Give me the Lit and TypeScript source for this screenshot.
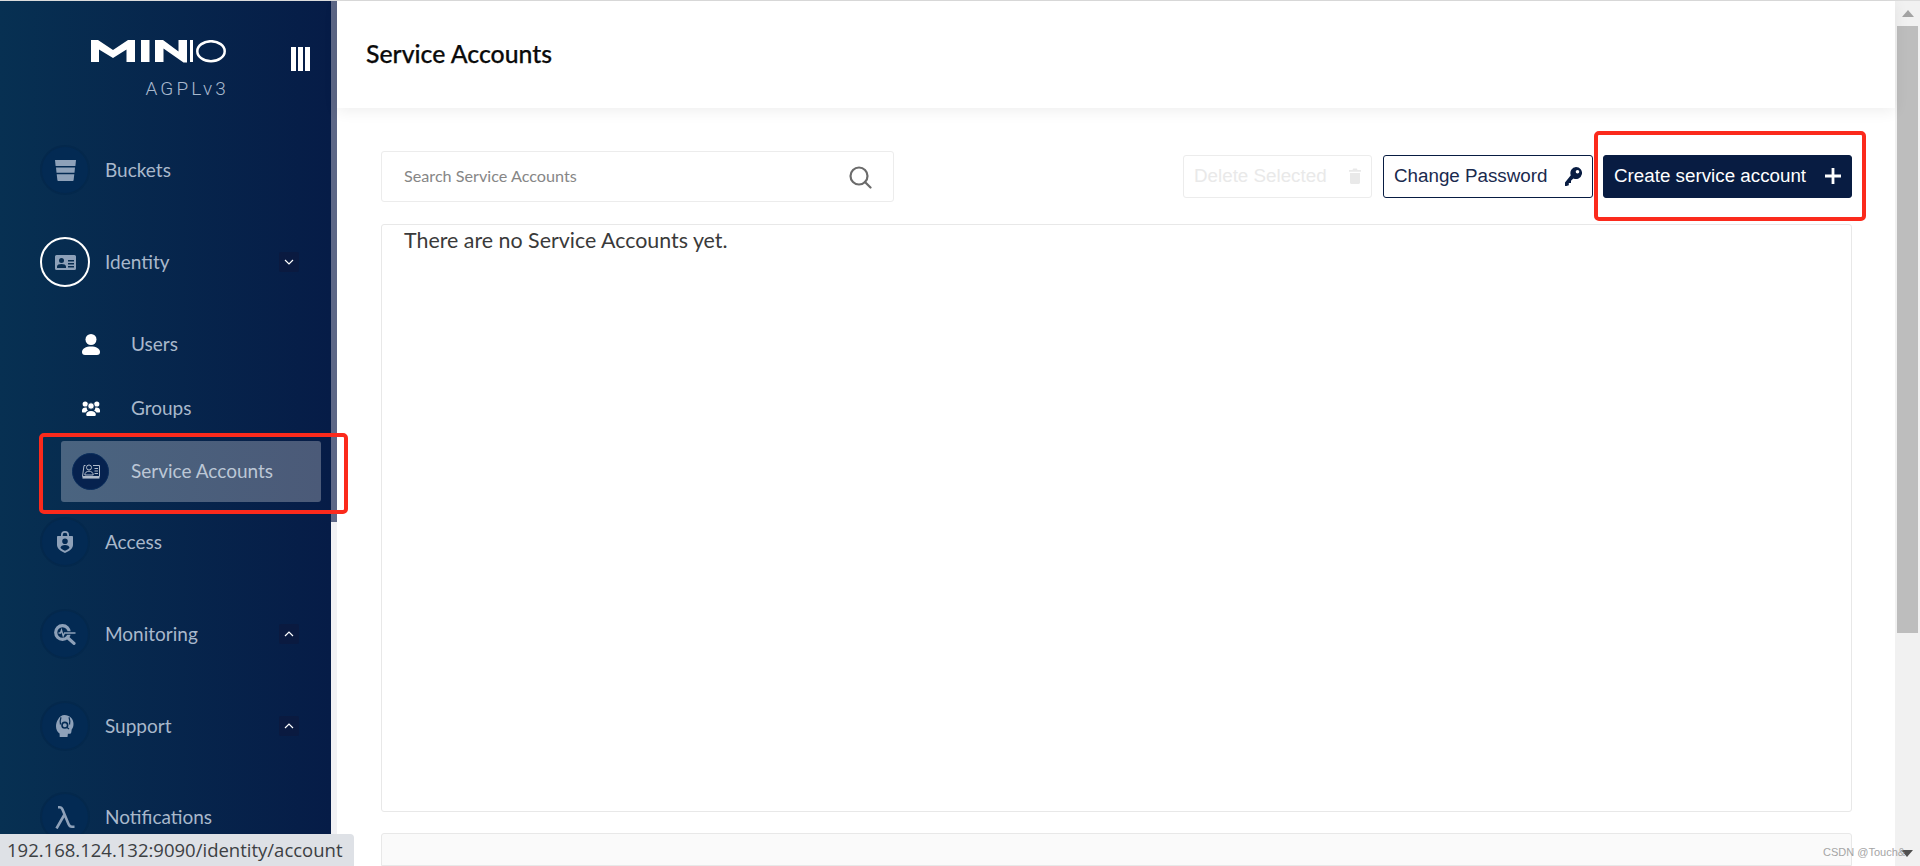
import { LitElement, html, css, svg } from "lit";
import { customElement } from "lit/decorators.js";

const ICONS: Record<string, any> = {
  bucket: svg`<svg class="ic" width="21" height="21" viewBox="0 0 21 21"><path fill="currentColor" d="M0 0h21l-.6 6H.6zM1 7.400h19l-.5 5.300h-18zM1.700 14.200h17.600l-.7 6.100q-.1.700-.8.700H3.200q-.7 0-.8-.7z"/></svg>`,
  identity: svg`<svg class="ic" width="21" height="15" viewBox="0 0 21 15"><path fill="currentColor" fill-rule="evenodd" d="M1.500 0h18A1.500 1.500 0 0 1 21 1.500v12a1.500 1.500 0 0 1-1.500 1.500h-18A1.500 1.500 0 0 1 0 13.500v-12A1.500 1.500 0 0 1 1.500 0zM6.500 3a2.500 2.500 0 1 0 0 5 2.500 2.500 0 0 0 0-5zM2 13h9v-1.500C11 9.800 9 9 6.500 9S2 9.800 2 11.500zM13 5v1.500h6V5zM13 8v1.500h6V8zM13 11v1.500h6V11z"/></svg>`,
  user: svg`<svg width="18" height="21" viewBox="0 0 18 21"><g fill="#fff"><circle cx="9" cy="5.500" r="5.500"/><path d="M0 18c0-3.500 4-5.500 9-5.500s9 2 9 5.500c0 2-1 3-3 3H3c-2 0-3-1-3-3z"/></g></svg>`,
  group: svg`<svg width="18" height="15" viewBox="0 0 18 15"><g fill="#fff"><circle cx="3.200" cy="3" r="2.600"/><circle cx="14.800" cy="3" r="2.600"/><circle cx="9" cy="5" r="3.200" stroke="#06284f" stroke-width=".8"/><path d="M0 9.500C0 7.500 1.500 6.500 3.500 6.500c.5 0 1 .1 1.400.3-.3 1 .2 2 1 2.600-1.200.5-2 1.200-2.400 2.100H1c-.7 0-1-.4-1-1zM18 9.500c0-2-1.500-3-3.500-3-.5 0-1 .1-1.400.3.3 1-.2 2-1 2.600 1.200.5 2 1.200 2.400 2.100H17c.7 0 1-.4 1-1z"/><path d="M4.200 13.500c0-2 2-3.500 4.800-3.500s4.800 1.500 4.800 3.500c0 1-.6 1.500-1.500 1.500H5.700c-.9 0-1.500-.5-1.500-1.500z"/></g></svg>`,
  service: svg`<svg width="18" height="15" viewBox="0 0 18 15" fill="none" stroke="#c3ccd8" stroke-width=".9"><circle cx="7" cy="3.500" r="2.500"/><path d="M2.800 11c0-2.500 2-3.800 4.200-3.800s4.200 1.300 4.200 3.800z"/><path d="M3.500 1.500H2L.5 12.500h17V1.500h-6.500M12.500 4.500h3.500M12.500 7h3.500M12.500 9.500h3.500"/><path d="M.5 13.800h17" stroke-width="1.400"/></svg>`,
  access: svg`<svg class="ic" width="16" height="22" viewBox="0 0 16 22"><path fill="currentColor" fill-rule="evenodd" d="M4 5V4a4 4 0 0 1 8 0v1h3c.6 0 1 .4 1 1v8c0 3.500-4 6.500-8 8-4-1.500-8-4.500-8-8V6c0-.6.400-1 1-1zM5.700 5h4.600V4a2.300 2.300 0 0 0-4.600 0zM8 7.500a2.800 2.800 0 1 0 0 5.600 2.800 2.800 0 0 0 0-5.600zM3.500 16.800c1 1.300 3 2.500 4.500 3 1.500-.5 3.500-1.700 4.500-3 0-1.500-2-2.800-4.500-2.800s-4.500 1.300-4.500 2.800z"/></svg>`,
  monitor: svg`<svg class="ic" width="22" height="21" viewBox="0 0 22 21"><g fill="none"><circle cx="8.500" cy="8.500" r="6.800" stroke="currentColor" stroke-width="3.200"/><path stroke="#052c55" stroke-width="3.600" d="M12 9h8"/><path stroke="currentColor" stroke-width="1.300" d="M4.500 9h2l1-3 1.700 6 1.300-3h11"/><path stroke="currentColor" stroke-width="3.200" stroke-linecap="round" d="M14 14l6 5.400"/></g></svg>`,
  support: svg`<svg class="ic" width="18" height="22" viewBox="0 0 18 22"><path fill="currentColor" d="M8.500 0C13.500 0 17.500 3.600 17.500 8.800c0 2.400-.5 4.300-1.800 5.800l-.4 2.600c-.2 1-.9 1.500-1.900 1.500h-1.500l-.4 3.300H3.700l-.1-3.600C1.300 17.100 0 14.500 0 11.300 0 8.800.6 6.500 2 4.400 3.500 1.700 5.800 0 8.500 0z"/><path fill="none" stroke="#052c55" stroke-width="1.200" d="M5 2.300C4 5 4 7.500 4.500 9.500M13 2.300c1 2.700 1 5.200.5 7.200"/><circle cx="8.800" cy="10.200" r="2.800" fill="none" stroke="#052c55" stroke-width="1.600"/><path stroke="#052c55" stroke-width="1.200" d="M11 12.500l2 1.500"/></svg>`,
  lambda: svg`<svg class="ic" width="21" height="23" viewBox="0 0 21 23"><path fill="none" stroke="currentColor" stroke-width="2.600" d="M3 1.300h1.500c1.500 0 2.400.8 3 2.300l6 14.500c.7 1.700 1.500 2.700 3.500 2.700h2.500M9.500 8.500L1.500 22.500"/></svg>`,
  down: svg`<svg width="10" height="6" viewBox="0 0 10 6"><path d="M1 1l4 4 4-4" fill="none" stroke="#fff" stroke-width="1.200"/></svg>`,
  up: svg`<svg width="10" height="6" viewBox="0 0 10 6"><path d="M1 5l4-4 4 4" fill="none" stroke="#fff" stroke-width="1.200"/></svg>`,
};

const LOGO = svg`<svg class="logo-mark" width="135" height="23" viewBox="0 0 135 23"><g fill="#fff"><path d="M0 0h7l15 10L37 0h7v22h-8.500V9.500L22 18 8 9.500V22H0z"/><path d="M50 0h8.500v22H50z"/><path d="M64 0h8l15.500 11.500V0H96v22.500h-3.500L72.500 8.500V22H64z"/><path d="M99 0h3v22h-3z"/></g><ellipse cx="120" cy="11.200" rx="13.700" ry="10" fill="none" stroke="#fff" stroke-width="2.500"/></svg>`;

interface NavItem { label: string; icon: string; chevron?: string; focus?: boolean; }

@customElement("app-root")
export class AppRoot extends LitElement {
  static styles = css`
    :host { display: block; width: 1920px; height: 866px; overflow: hidden; position: relative; background: #fff; font-family: Lato, "Open Sans", sans-serif; }
    .page { display: flex; height: 866px; border-top: 1px solid #dcdcdc; box-sizing: border-box; }
    .side { width: 337px; flex: none; position: relative; overflow: hidden; background: #f1f1f4; }
    .nav { width: 331px; height: 100%; background: linear-gradient(90deg, #073052 0%, #061c47 100%); }
    .thumb { position: absolute; left: 331px; top: 0; width: 6px; height: 521px; background: #5d6786; }
    .brand { height: 144px; box-sizing: border-box; padding: 39px 21px 0 90px; position: relative; display: flex; justify-content: space-between; }
    .brand-left { display: flex; flex-direction: column; align-items: flex-end; width: 136px; }
    .logo-mark { display: block; }
    .agpl { margin-top: 16px; font: 300 19px/20px Roboto, sans-serif; letter-spacing: 3.100px; color: #a9b9ce; margin-right: -3px; }
    .burger { display: flex; gap: 2.500px; margin-top: 7px; height: 24px; }
    .burger i { width: 4.700px; background: #fff; }
    .row { display: flex; align-items: center; height: 50px; padding-left: 40px; margin-bottom: 42px; color: #a9b8cb; font-size: 19px; }
    .row.open { margin-bottom: 25px; }
    .row.tight { margin-bottom: 41px; }
    .circle { width: 50px; height: 50px; border-radius: 50%; box-sizing: border-box; display: flex; align-items: center; justify-content: center; background: #032a53; border: 2px solid #04284c; color: #8ea1b9; flex: none; margin-right: 15px; }
    .circle.focus { background: transparent; border: 2px solid #fff; }
    .label { flex: 1; padding-bottom: 2px; }
    .chev { width: 20px; height: 20px; margin-right: 32px; background: #0a1a40; display: flex; align-items: center; justify-content: center; border-radius: 2px; }
    .subs { margin-bottom: 15px; }
    .sub { height: 64px; display: flex; align-items: center; margin-left: 61px; width: 260px; border-radius: 3px; color: #a9b8cb; font-size: 19px; box-sizing: border-box; }
    .sub .name { padding-bottom: 2px; }
    .sub .slot { width: 37px; height: 37px; margin-left: 11px; margin-right: 22px; display: flex; align-items: center; justify-content: center; border-radius: 50%; flex: none; }
    .sub.active { height: 61px; margin-top: 1px; margin-bottom: 2px; background: linear-gradient(90deg, #4a6480, #4b5a78); color: #bcc7d6; }
    .sub.active .slot { background: #06224f; border: 1px solid #0a2d5c; box-sizing: border-box; }
    .main { flex: 1; min-width: 0; display: flex; flex-direction: column; position: relative; }
    .head { height: 107px; flex: none; display: flex; align-items: center; padding-left: 29px; background: #fff; box-shadow: 0 3px 14px rgba(0,0,0,.07); position: relative; z-index: 1; }
    .head h1 { margin: 0; font-size: 24.800px; font-weight: 500; color: #0b0b0b; position: relative; top: -1px; -webkit-text-stroke: .25px #0b0b0b; }
    .content { flex: 1; min-height: 0; padding: 43px 43px 0 44px; display: flex; flex-direction: column; overflow: hidden; }
    .bar { display: flex; align-items: center; justify-content: space-between; height: 51px; margin-bottom: 22px; flex: none; }
    .search { width: 513px; height: 51px; box-sizing: border-box; border: 1px solid #ececec; border-radius: 3px; display: flex; align-items: center; justify-content: space-between; padding: 0 21px 0 22px; }
    .search span { color: #868686; font-size: 16.200px; padding-bottom: 2px; }
    .btns { display: flex; }
    .btn { height: 43px; box-sizing: border-box; border-radius: 3px; display: flex; align-items: center; justify-content: space-between; font: 18.800px "Liberation Sans", Arial, sans-serif; padding: 0 10px 1px; border: 1px solid #081c42; }
    .btn.off { width: 189px; color: #e9e9e9; border-color: #ececec; margin-right: 11px; }
    .btn.line { width: 210px; color: #1a2a4e; background: #fff; margin-right: 10px; }
    .btn.solid { width: 249px; color: #fff; background: #081c42; }
    .list { height: 588px; box-sizing: border-box; flex: none; border: 1px solid #e8e8e8; border-radius: 3px; padding-left: 22px; font-size: 21.400px; line-height: 30px; color: #3a3a3a; margin-bottom: 21px; }
    .panel { flex: 1; background: #fafafa; border: 1px solid #e8e8e8; border-radius: 3px 3px 0 0; }
    .sb { width: 25px; flex: none; background: #f1f1f1; position: relative; display: flex; flex-direction: column; align-items: center; }
    .sb .up { margin-top: 9px; width: 0; height: 0; border-left: 6px solid transparent; border-right: 6px solid transparent; border-bottom: 7px solid #a3a3a3; }
    .sb .th { margin-top: 9px; width: 21px; height: 607px; background: #bdbdbd; }
    .sb .dn { position: absolute; top: 849px; left: 6px; width: 0; height: 0; border-left: 6px solid transparent; border-right: 6px solid transparent; border-top: 7px solid #505050; }
    .mark { position: absolute; border: 4px solid #fb2a1c; border-radius: 5px; box-sizing: border-box; z-index: 5; pointer-events: none; }
    .mark.a { left: 39px; top: 433px; width: 309px; height: 81px; }
    .mark.b { left: 1594px; top: 131px; width: 272px; height: 90px; }
    .status { position: absolute; left: 0; bottom: 0; width: 354px; height: 32px; background: #dee1e6; border-top-right-radius: 4px; z-index: 6; font: 18.500px/32px "Open Sans", sans-serif; color: #3c4043; padding-left: 7px; box-sizing: border-box; white-space: nowrap; }
    .wm { position: absolute; left: 1823px; top: 845px; font: 11px/14px "Liberation Sans", sans-serif; color: #a5a5a5; z-index: 6; }
  `;

  private row(n: NavItem, cls = "") {
    return html`<div class="row ${cls}">
      <div class="circle ${n.focus ? "focus" : ""}">${ICONS[n.icon]}</div>
      <span class="label">${n.label}</span>
      ${n.chevron ? html`<div class="chev">${ICONS[n.chevron]}</div>` : ""}
    </div>`;
  }

  render() {
    return html`
      <div class="page">
        <aside class="side">
          <div class="nav">
            <div class="brand">
              <div class="brand-left">${LOGO}<div class="agpl">AGPLv3</div></div>
              <div class="burger"><i></i><i></i><i></i></div>
            </div>
            ${this.row({ label: "Buckets", icon: "bucket" })}
            ${this.row({ label: "Identity", icon: "identity", chevron: "down", focus: true }, "open")}
            <div class="subs">
              <div class="sub"><div class="slot">${ICONS.user}</div><span class="name">Users</span></div>
              <div class="sub"><div class="slot">${ICONS.group}</div><span class="name">Groups</span></div>
              <div class="sub active"><div class="slot">${ICONS.service}</div><span class="name">Service Accounts</span></div>
            </div>
            ${this.row({ label: "Access", icon: "access" })}
            ${this.row({ label: "Monitoring", icon: "monitor", chevron: "up" })}
            ${this.row({ label: "Support", icon: "support", chevron: "up" }, "tight")}
            ${this.row({ label: "Notifications", icon: "lambda" })}
          </div>
          <div class="thumb"></div>
        </aside>
        <main class="main">
          <header class="head"><h1>Service Accounts</h1></header>
          <section class="content">
            <div class="bar">
              <div class="search">
                <span>Search Service Accounts</span>
                <svg width="24" height="24" viewBox="0 0 24 24" fill="none" stroke="#6b6b6b" stroke-width="2.200"><circle cx="11" cy="11" r="8.500"/><path d="M17 17l5.500 5.500" stroke-linecap="round"/></svg>
              </div>
              <div class="btns">
                <div class="btn off">Delete Selected
                  <svg width="12" height="16" viewBox="0 0 12 16"><path fill="#e9e9e9" d="M0 2h3.500l.7-1.500h3.600L8.500 2H12v1.800H0zM1 5h10v9.500c0 .8-.7 1.500-1.500 1.500h-7C1.700 16 1 15.300 1 14.500z"/></svg>
                </div>
                <div class="btn line">Change Password
                  <svg width="17" height="19" viewBox="0 0 17 19"><path fill="#081c42" fill-rule="evenodd" d="M11 0a6 6 0 1 1-2.600 11.400L6 13.800V16H3.800v2.300L1.500 19H0v-3.500l5.800-7.300A6 6 0 0 1 11 0zm1.500 3a1.800 1.800 0 1 0 0 3.600 1.800 1.800 0 0 0 0-3.600z"/></svg>
                </div>
                <div class="btn solid">Create service account
                  <svg width="16" height="16" viewBox="0 0 16 16"><path fill="#fff" d="M6.600 0h2.800v6.600H16v2.800H9.400V16H6.600V9.400H0V6.600h6.600z"/></svg>
                </div>
              </div>
            </div>
            <div class="list">There are no Service Accounts yet.</div>
            <div class="panel"></div>
          </section>
        </main>
        <div class="sb"><div class="up"></div><div class="th"></div><div class="dn"></div></div>
      </div>
      <div class="mark a"></div>
      <div class="mark b"></div>
      <div class="status">192.168.124.132:9090/identity/account</div>
      <div class="wm">CSDN @Touch&amp;</div>
    `;
  }
}
